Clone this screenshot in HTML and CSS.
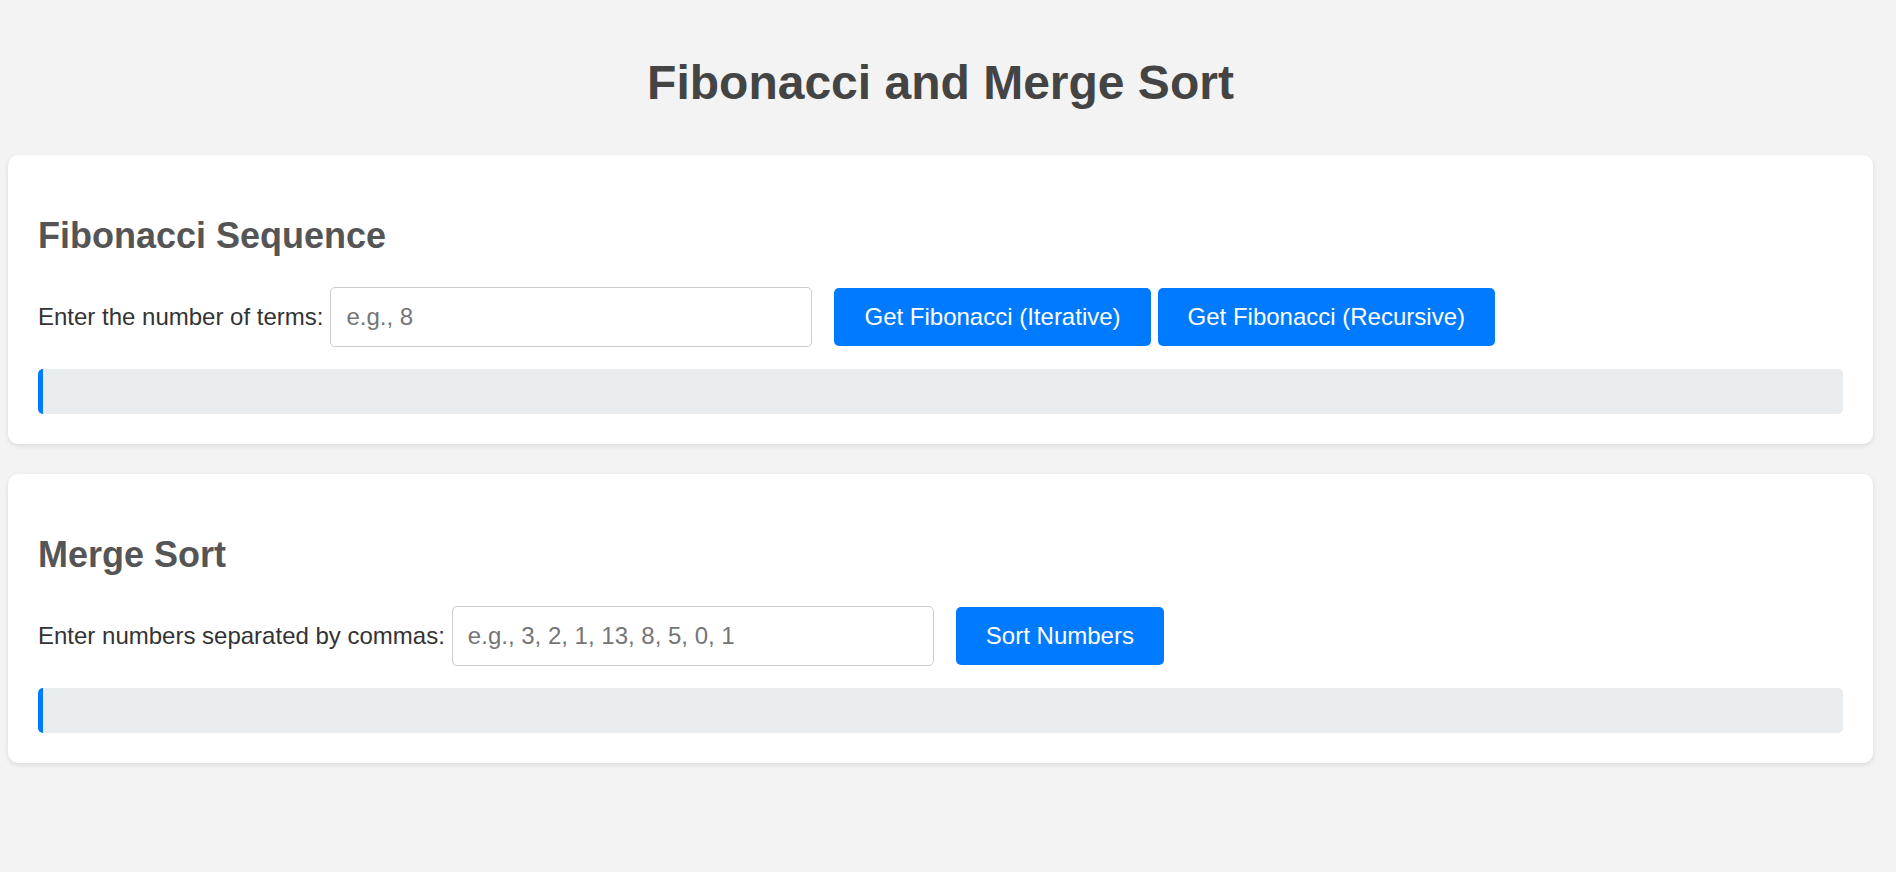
FILE: index.html
```html
<!DOCTYPE html>
<html lang="en">
<head>
<meta charset="utf-8">
<title>Fibonacci and Merge Sort</title>
<link rel="stylesheet" href="styles.css">
</head>
<body>
  <h1 class="title">Fibonacci and Merge Sort</h1>

  <section class="card">
    <h2 class="card-title">Fibonacci Sequence</h2>
    <div class="row">
      <label class="label" for="fib">Enter the number of terms:</label>
      <input class="field" id="fib" type="text" placeholder="e.g., 8">
      <button class="btn">Get Fibonacci (Iterative)</button>
      <button class="btn">Get Fibonacci (Recursive)</button>
    </div>
    <div class="output"></div>
  </section>

  <section class="card">
    <h2 class="card-title">Merge Sort</h2>
    <div class="row">
      <label class="label" for="nums">Enter numbers separated by commas:</label>
      <input class="field" id="nums" type="text" placeholder="e.g., 3, 2, 1, 13, 8, 5, 0, 1">
      <button class="btn">Sort Numbers</button>
    </div>
    <div class="output"></div>
  </section>
</body>
</html>
```

FILE: styles.css
```css
body {
  margin: 0;
  padding: 55px 23px 40px 8px;
  background: #f3f3f3;
  font-family: "Liberation Sans", Arial, sans-serif;
  color: #333;
}

.title {
  margin: 0 0 45px;
  font-size: 48px;
  line-height: 55px;
  font-weight: bold;
  text-align: center;
  color: #444;
}

.card {
  background: #fff;
  border-radius: 10px;
  padding: 30px;
  margin-bottom: 30px;
  box-shadow: 0 2px 5px rgba(0, 0, 0, 0.1);
}

.card-title {
  margin: 30px 0 30px;
  font-size: 36px;
  line-height: 42px;
  font-weight: bold;
  color: #555;
}

.row {
  display: flex;
  align-items: center;
  height: 60px;
  margin-bottom: 22px;
}

.label {
  font-size: 24px;
  color: #333;
  margin-right: 7px;
}

.field {
  box-sizing: border-box;
  width: 482px;
  height: 60px;
  padding: 0 15px;
  border: 1px solid #ccc;
  border-radius: 5px;
  font-family: "Liberation Sans", Arial, sans-serif;
  font-size: 24px;
  color: #333;
  margin: 0 22px 0 0;
  outline: none;
}

.field::placeholder {
  color: #757575;
}

.btn {
  height: 58px;
  padding: 0 30px;
  margin: 0 7px 0 0;
  border: none;
  border-radius: 5px;
  background: #007bff;
  color: #fff;
  font-family: "Liberation Sans", Arial, sans-serif;
  font-size: 24px;
  cursor: pointer;
}

.output {
  box-sizing: border-box;
  height: 45px;
  background: #e9ecef;
  border-left: 5px solid #007bff;
  border-radius: 5px;
}
```
